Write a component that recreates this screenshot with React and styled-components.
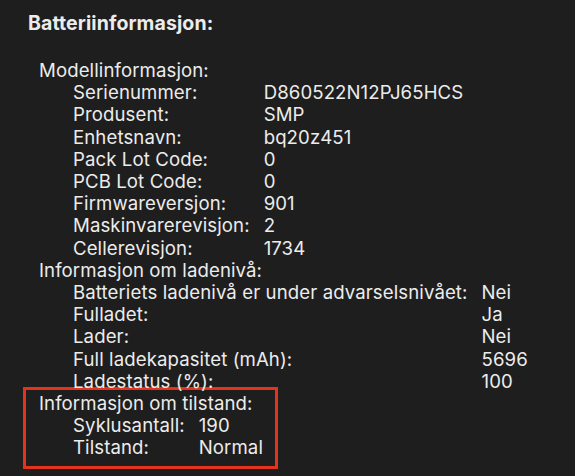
import React from 'react'
import styled, { createGlobalStyle } from 'styled-components'

const Global = createGlobalStyle`
  html, body {
    margin: 0;
    background: #1e1e1e;
  }
  body {
    font-family: Inter, "Noto Sans", sans-serif;
    color: #ececec;
    -webkit-font-smoothing: antialiased;
  }
`

const sections = [
  {
    title: 'Modellinformasjon:',
    rows: [
      ['Serienummer:', 'D860522N12PJ65HCS'],
      ['Produsent:', 'SMP'],
      ['Enhetsnavn:', 'bq20z451'],
      ['Pack Lot Code:', '0'],
      ['PCB Lot Code:', '0'],
      ['Firmwareversjon:', '901'],
      ['Maskinvarerevisjon:', '2'],
      ['Cellerevisjon:', '1734'],
    ],
  },
  {
    title: 'Informasjon om ladenivå:',
    rows: [
      ['Batteriets ladenivå er under advarselsnivået:', 'Nei'],
      ['Fulladet:', 'Ja'],
      ['Lader:', 'Nei'],
      ['Full ladekapasitet (mAh):', '5696'],
      ['Ladestatus (%):', '100'],
    ],
  },
  {
    title: 'Informasjon om tilstand:',
    highlight: true,
    rows: [
      ['Syklusantall:', '190'],
      ['Tilstand:', 'Normal'],
    ],
  },
]

const App = () => {
  return (
    <Wrapper>
      <Global />
      <Title>Batteriinformasjon:</Title>
      <Body>
        {sections.map((s) => (
          <Section key={s.title} $highlight={s.highlight}>
            <Heading>{s.title}</Heading>
            <Table>
              {s.rows.map(([label, value]) => (
                <React.Fragment key={label}>
                  <span>{label}</span>
                  <span>{value}</span>
                </React.Fragment>
              ))}
            </Table>
          </Section>
        ))}
      </Body>
    </Wrapper>
  )
}

export default App

const Wrapper = styled.main`
  width: 575px;
  height: 476px;
  padding: 11px 0 0 28px;
  box-sizing: border-box;
  overflow: hidden;
`

const Title = styled.h1`
  margin: 0;
  font-size: 19.5px;
  font-weight: 700;
  line-height: 24px;
  letter-spacing: 0.1px;
`

const Body = styled.div`
  margin-top: 24px;
  padding-left: 11px;
  font-size: 18.6px;
  letter-spacing: 0.1px;
  line-height: 22.2px;
`

const Section = styled.section`
  ${(p) =>
    p.$highlight &&
    `
    width: fit-content;
    margin: -5px 0 0 -16px;
    padding: 2px 12px 7px 13px;
    border: 3px solid #e5321c;
  `}
`

const Heading = styled.div``

const Table = styled.div`
  display: grid;
  grid-template-columns: auto auto;
  justify-content: start;
  column-gap: 14px;
  padding-left: 34px;
`
